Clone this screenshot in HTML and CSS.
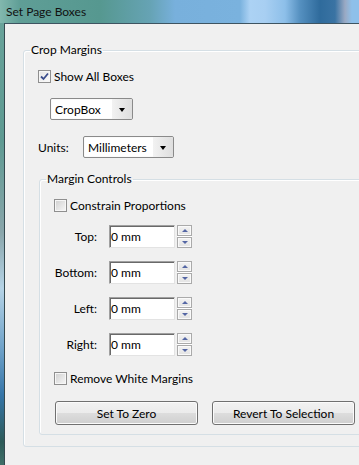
FILE: index.html
```html
<!DOCTYPE html>
<html>
<head>
<meta charset="utf-8">
<link rel="stylesheet" href="styles.css">
</head>
<body>
<div class="window">
  <div class="titlebar"><span class="title">Set Page Boxes</span></div>
  <div class="client">
    <fieldset class="group outer">
      <legend>Crop Margins</legend>
      <div class="group-body outer-body">
        <label class="check">
          <span class="box checked"><svg width="9" height="9" viewBox="0 0 9 9"><path d="M1 4.5 L3.5 7 L8 1.5" fill="none" stroke="#3a4d8c" stroke-width="1.8"/></svg></span>
          <span>Show All Boxes</span>
        </label>
        <div class="combo crop"><span class="combo-text">CropBox</span><span class="combo-btn"><span class="caret"></span></span></div>
        <div class="units-row">
          <span class="units-label">Units:</span>
          <div class="combo units"><span class="combo-text">Millimeters</span><span class="combo-btn"><span class="caret"></span></span></div>
        </div>
        <fieldset class="group inner">
          <legend>Margin Controls</legend>
          <div class="group-body inner-body">
            <label class="check"><span class="box"></span><span>Constrain Proportions</span></label>
            <div class="field-row first"><span class="flabel">Top:</span><div class="input">0 mm</div><div class="spin"><span class="sbtn"><span class="up"></span></span><span class="sbtn"><span class="down"></span></span></div></div>
            <div class="field-row"><span class="flabel">Bottom:</span><div class="input">0 mm</div><div class="spin"><span class="sbtn"><span class="up"></span></span><span class="sbtn"><span class="down"></span></span></div></div>
            <div class="field-row"><span class="flabel">Left:</span><div class="input">0 mm</div><div class="spin"><span class="sbtn"><span class="up"></span></span><span class="sbtn"><span class="down"></span></span></div></div>
            <div class="field-row"><span class="flabel">Right:</span><div class="input">0 mm</div><div class="spin"><span class="sbtn"><span class="up"></span></span><span class="sbtn"><span class="down"></span></span></div></div>
            <label class="check remove"><span class="box"></span><span>Remove White Margins</span></label>
            <div class="buttons">
              <button class="btn">Set To Zero</button>
              <button class="btn">Revert To Selection</button>
            </div>
          </div>
        </fieldset>
      </div>
    </fieldset>
  </div>
</div>
</body>
</html>
```
FILE: styles.css
```css
* { box-sizing: border-box; }
html, body { margin: 0; padding: 0; }
body {
  width: 359px;
  height: 465px;
  overflow: hidden;
  font-family: Lato, "Liberation Sans", sans-serif;
  font-size: 12px;
  color: #000;
}
.window {
  height: 465px;
  display: flex;
  flex-direction: column;
  background: linear-gradient(180deg, #6aa49b 0%, #5e9a92 30%, #8aa6ab 50%, #b5d3e6 62%, #6fa2c9 75%, #3575a8 85%, #2d5a58 95%, #3f6f68 100%);
}
.titlebar {
  height: 23px;
  flex: none;
  padding-left: 6px;
  display: flex;
  align-items: center;
  background: linear-gradient(90deg, #82b8ae 0, #5f9e96 20px, #569890 100px, #66a3b4 150px, #78b0dc 175px, #7ab2de 240px, #acd2f4 250px, #a8cff2 265px, #8dbfe9 285px, #5590c0 300px, #2f6b9c 320px, #3a73a3 335px, #9aa9c3 345px, #8ec0ea 352px);
}
.title { line-height: 16px; color: #111; }
.client {
  flex: 1;
  margin-left: 4px;
  border-top: 1px solid #3e5461;
  border-left: 1px solid #34494f;
  background: #f0f0f0;
  overflow: hidden;
  padding-left: 18px;
}
.group {
  margin: 0;
  padding: 0;
  border: 1px solid #d5dfe5;
  border-radius: 3px;
  box-shadow: inset 1px 1px 0 #fff;
  min-width: 0;
}
.group legend {
  padding: 0 1px;
  margin-left: 6px;
  line-height: 16px;
}
.outer { margin-top: 18px; width: 420px; }
.outer-body { padding: 10px 0 11px 14px; }
.inner { margin-top: 13px; margin-left: 1px; width: 400px; }
.inner-body { padding: 10px 0 9px 14px; }

.check { display: flex; align-items: center; height: 16px; gap: 3px; }
.box {
  width: 13px; height: 13px;
  border: 1px solid #8f8f8f;
  background: linear-gradient(135deg, #cfcfcf, #f7f7f7);
  box-shadow: inset 0 0 0 1px #f6f6f6;
  display: flex; align-items: center; justify-content: center;
}
.box.checked { background: linear-gradient(135deg, #e4e4e4, #fbfbfb); }

.combo {
  height: 22px;
  border: 1px solid #8a8a8a;
  border-radius: 2px;
  background: #fff;
  display: flex;
  align-items: stretch;
  box-shadow: inset 0 0 0 1px #fbfbfb;
}
.combo-text { flex: 1; padding-left: 4px; display: flex; align-items: center; }
.combo-btn {
  width: 20px;
  background: linear-gradient(90deg, #f2f2f2, #dedede);
  display: flex; align-items: center; justify-content: center;
  border-radius: 0 2px 2px 0;
}
.caret {
  width: 0; height: 0;
  border-left: 3.5px solid transparent;
  border-right: 3.5px solid transparent;
  border-top: 4px solid #000;
  margin-top: 1px;
}
.crop { margin-top: 14px; margin-left: 12px; width: 83px; }
.units-row { margin-top: 16px; display: flex; align-items: center; height: 22px; }
.units-label { width: 45px; }
.units { width: 91px; }

.field-row { display: flex; align-items: center; height: 23px; margin-top: 13px; }
.field-row.first { margin-top: 12px; }
.flabel { width: 43px; text-align: right; margin-right: 12px; }
.input {
  width: 66px; height: 23px;
  background: #fff;
  border: 1px solid;
  border-color: #a0a0a0 #e3e3e3 #e3e3e3 #a0a0a0;
  box-shadow: inset 1px 1px 0 #696969;
  padding-left: 1px;
  display: flex; align-items: center;
}
.spin {
  width: 15px; height: 23px; margin-left: 2px;
  display: flex; flex-direction: column; gap: 1px;
  background: #fff;
  padding: 0;
}
.sbtn {
  flex: 1;
  border: 1px solid #aaaaaa;
  background: linear-gradient(#f3f3f3, #e2e2e2);
  box-shadow: inset 0 0 0 1px #fafafa;
  display: flex; align-items: center; justify-content: center;
}
.up, .down { width: 0; height: 0; border-left: 3px solid transparent; border-right: 3px solid transparent; }
.up { border-bottom: 3px solid #5466a4; }
.down { border-top: 3px solid #5466a4; }

.remove { margin-top: 14px; }
.buttons { margin-top: 15px; display: flex; gap: 14px; padding-left: 1px; }
.btn {
  width: 143px; height: 24px;
  margin: 0;
  border: 1px solid #707070;
  border-radius: 3px;
  background: linear-gradient(#f2f2f2 0, #ebebeb 50%, #dddddd 50%, #cfcfcf 100%);
  box-shadow: inset 0 0 0 1px #fbfbfb;
  font: inherit;
  color: #000;
  padding: 0;
}
```
